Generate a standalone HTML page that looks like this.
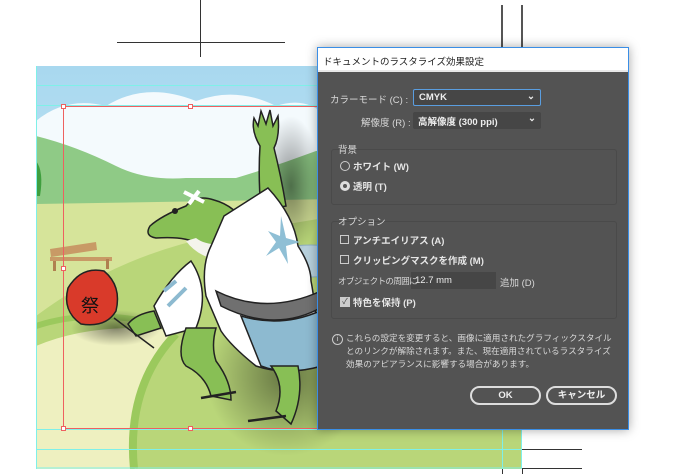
<!DOCTYPE html>
<html><head><meta charset="utf-8"><style>
*{margin:0;padding:0;box-sizing:border-box}
body{width:680px;height:474px;background:#fff;position:relative;overflow:hidden;font-family:"Liberation Sans","Noto Sans CJK JP",sans-serif}
.a{position:absolute}
.dlg{left:317px;top:47px;width:312px;height:383px;background:#535353;border:1px solid #3a8ee6;box-shadow:0 0 10px rgba(0,0,0,.35)}
.title{left:0;top:0;width:310px;height:24px;background:#fff;border-bottom:2px solid #e8e8e8;font-size:9.5px;color:#222;padding:6px 0 0 5px}
.t{font-size:9.5px;color:#d8d8d8;white-space:nowrap}
.b{font-weight:bold;color:#e6e6e6}
.sel{background:#464646;border-radius:2px;font-size:9.5px;color:#eee;font-weight:bold;padding:2px 0 0 5px}
.grp{border:1px solid #4a4a4a;border-radius:3px}
.cb{width:9px;height:9px;border:1px solid #ccc}
.btn{border:2px solid #ddd;border-radius:10px;color:#eee;font-size:9.5px;font-weight:bold;text-align:center;line-height:15px}
</style></head><body>
<div class="a" style="left:117px;top:42px;width:168px;height:1px;background:#333"></div>
<div class="a" style="left:200px;top:0;width:1px;height:57px;background:#333"></div>
<div class="a" style="left:501px;top:5px;width:2px;height:42px;background:#555"></div>
<div class="a" style="left:521px;top:5px;width:2px;height:42px;background:#555"></div>
<div class="a" style="left:522px;top:449px;width:60px;height:1px;background:#333"></div>
<div class="a" style="left:522px;top:468px;width:60px;height:1px;background:#333"></div>
<div class="a" style="left:502px;top:469px;width:1px;height:5px;background:#333"></div>
<div class="a" style="left:522px;top:469px;width:1px;height:5px;background:#333"></div>
<svg class="a" style="left:36px;top:66px" width="486" height="403" viewBox="0 0 486 403">
<defs>
<linearGradient id="sky" x1="0" y1="0" x2="0" y2="1"><stop offset="0" stop-color="#a8d8ef"/><stop offset="1" stop-color="#e6f4fb"/></linearGradient>
<radialGradient id="sh" cx=".5" cy=".5" r=".5"><stop offset="0" stop-color="#000" stop-opacity=".45"/><stop offset="1" stop-color="#000" stop-opacity="0"/></radialGradient>
</defs>
<rect width="486" height="403" fill="url(#sky)"/>
<path d="M0 55 Q30 30 70 40 Q110 15 160 35 Q200 20 240 40 Q270 30 290 50 L290 115 L0 115Z" fill="#f4fafd"/>
<path d="M0 70 Q40 80 80 100 Q110 115 150 112 L200 112 Q240 100 280 85 L486 70 L486 150 L0 150Z" fill="#8fca86"/>
<path d="M0 138 L486 130 L486 403 L0 403Z" fill="#d6e49a"/>
<path d="M0 250 Q80 190 180 170 L300 150 L486 200 L486 403 L100 403 Q90 320 140 270 Q60 260 0 280Z" fill="#b9d679"/>
<path d="M0 280 Q60 255 140 265 Q95 320 100 403 L0 403Z" fill="#eef0c0"/>
<path d="M0 260 Q60 240 140 262" stroke="#9bc95d" stroke-width="6" fill="none"/>
<path d="M98 403 Q90 320 140 268" stroke="#9bc95d" stroke-width="8" fill="none"/>
<path d="M0 95 Q8 105 4 130 L0 130Z" fill="#3f9e3e"/>
<ellipse cx="275" cy="195" rx="45" ry="16" fill="#b7d0dc" stroke="#8fb0c0"/>
<path d="M14 183 L60 176 L61 184 L15 191Z" fill="#c89a66"/><rect x="14" y="191" width="62" height="4" fill="#c89a66"/><rect x="17" y="195" width="3" height="10" fill="#b08050"/><rect x="70" y="193" width="3" height="10" fill="#b08050"/>
<ellipse cx="250" cy="310" rx="80" ry="80" fill="url(#sh)"/>
<ellipse cx="255" cy="120" rx="30" ry="70" fill="url(#sh)"/>
<ellipse cx="80" cy="262" rx="45" ry="18" fill="url(#sh)"/>
<path d="M225 145 Q222 110 224 80 Q215 65 218 52 L222 60 L225 45 L230 58 L234 44 L237 60 L242 50 Q244 70 238 82 Q245 110 250 140Z" fill="#88bf55" stroke="#222" stroke-width="1.5"/>
<path d="M150 140 Q160 128 178 134 Q200 140 210 160 Q212 180 200 195 Q175 200 162 178 Q150 170 120 172 Q108 170 114 160 Q125 150 150 140Z" fill="#88bf55" stroke="#222" stroke-width="1.5"/>
<path d="M150 175 Q165 195 195 195 L190 178 Q170 180 160 172Z" fill="#f4f4ec"/>
<circle cx="139" cy="145" r="3" fill="#222"/>
<path d="M148 126 L168 136 M163 125 L153 138" stroke="#fff" stroke-width="4"/>
<path d="M188 150 L232 122 Q258 150 262 180 Q275 200 275 215 Q280 240 284 300 Q250 310 220 300 Q195 280 185 265 L170 230 Q165 200 175 180Z" fill="#fff" stroke="#222" stroke-width="1.5"/>
<path d="M245 150 L250 172 L264 176 L250 180 L252 198 L243 182 L230 190 L240 176 L232 165 L244 170Z" fill="#8fbfd5"/>
<path d="M180 225 Q230 250 285 225 L288 240 Q240 268 185 240Z" fill="#707070" stroke="#222" stroke-width="1.5"/>
<path d="M205 250 Q245 262 284 245 L286 300 Q250 310 225 300Z" fill="#8dbad0" stroke="#222" stroke-width="1.5"/>
<path d="M155 195 Q135 210 118 240 L130 270 L160 262 Q175 225 155 195Z" fill="#fff" stroke="#222" stroke-width="1.5"/>
<path d="M128 225 L140 215 M132 240 L150 222" stroke="#8dbad0" stroke-width="4"/>
<path d="M118 245 Q100 248 92 258 L100 270 L125 262 Z" fill="#88bf55" stroke="#222" stroke-width="1.5"/>
<line x1="78" y1="252" x2="118" y2="282" stroke="#222" stroke-width="1.5"/>
<path d="M32 222 Q45 200 68 205 Q86 220 80 245 Q70 262 45 258 Q26 245 32 222Z" fill="#d93a2a" stroke="#222" stroke-width="1.5"/>
<text x="45" y="246" font-size="18" font-family="Noto Sans CJK JP,sans-serif" fill="#111">祭</text>
<path d="M150 262 Q140 290 150 300 Q170 310 175 330 L195 334 Q195 315 180 295 Q175 280 180 262Z" fill="#88bf55" stroke="#222" stroke-width="1.5"/>
<path d="M235 300 Q250 320 240 345 L255 358 Q268 330 262 300Z" fill="#88bf55" stroke="#222" stroke-width="1.5"/>
<path d="M165 332 L200 326 M212 355 L250 350" stroke="#222" stroke-width="2.5"/>
<g stroke="#7ff0e8" stroke-width="1" fill="none">
<line x1="0" y1="19.5" x2="486" y2="19.5"/><line x1="0" y1="39.5" x2="486" y2="39.5"/>
<line x1="0" y1="363.5" x2="486" y2="363.5"/><line x1="0" y1="383.5" x2="486" y2="383.5"/><line x1="0" y1="402" x2="486" y2="402"/>
<line x1="0.5" y1="0" x2="0.5" y2="403"/><line x1="466.5" y1="0" x2="466.5" y2="403"/><line x1="485.5" y1="0" x2="485.5" y2="403"/>
</g>
<rect x="27.5" y="40.5" width="254" height="322" fill="none" stroke="#ee6060"/>
<g fill="#fff" stroke="#ee6060"><rect x="25.5" y="38.5" width="4" height="4"/><rect x="152.5" y="38.5" width="4" height="4"/><rect x="25.5" y="200.5" width="4" height="4"/><rect x="25.5" y="360.5" width="4" height="4"/><rect x="152.5" y="360.5" width="4" height="4"/></g>
</svg>
<div class="a dlg">
<div class="a title">ドキュメントのラスタライズ効果設定</div>
<div class="a t" style="left:12px;top:44px">カラーモード (C) :</div>
<div class="a sel" style="left:95px;top:41px;width:128px;height:17px;border:1px solid #5a9ee0">CMYK<span style="position:absolute;right:5px;top:1px">⌄</span></div>
<div class="a t" style="left:43px;top:67px">解像度 (R) :</div>
<div class="a sel" style="left:95px;top:64px;width:128px;height:17px">高解像度 (300 ppi)<span style="position:absolute;right:5px;top:1px">⌄</span></div>
<div class="a grp" style="left:13px;top:101px;width:286px;height:56px"></div>
<div class="a t" style="left:20px;top:94px">背景</div>
<div class="a" style="left:22px;top:113px;width:10px;height:10px;border:1px solid #ccc;border-radius:50%"></div>
<div class="a t b" style="left:35px;top:111px">ホワイト (W)</div>
<div class="a" style="left:22px;top:133px;width:10px;height:10px;background:#ddd;border-radius:50%"><div style="margin:3px;width:4px;height:4px;background:#555;border-radius:50%"></div></div>
<div class="a t b" style="left:35px;top:131px">透明 (T)</div>
<div class="a grp" style="left:13px;top:173px;width:286px;height:98px"></div>
<div class="a t" style="left:20px;top:166px">オプション</div>
<div class="a cb" style="left:22px;top:187px"></div>
<div class="a t b" style="left:35px;top:185px">アンチエイリアス (A)</div>
<div class="a cb" style="left:22px;top:207px"></div>
<div class="a t b" style="left:35px;top:205px">クリッピングマスクを作成 (M)</div>
<div class="a" style="left:93px;top:224px;width:85px;height:17px;background:#464646;font-size:9.5px;color:#eee;padding:3px 0 0 4px">12.7 mm</div>
<div class="a t" style="left:20px;top:227px;font-size:8.6px;letter-spacing:-0.7px">オブジェクトの周囲に</div>
<div class="a t" style="left:182px;top:227px">追加 (D)</div>
<div class="a" style="left:22px;top:249px;width:10px;height:10px;background:#ccc;font-size:8px;color:#444;text-align:center;line-height:10px">✓</div>
<div class="a t b" style="left:35px;top:247px">特色を保持 (P)</div>
<div class="a" style="left:14px;top:286px;width:11px;height:11px;border:1px solid #ccc;border-radius:50%;font-size:7px;color:#ddd;text-align:center;line-height:9px">i</div>
<div class="a t" style="left:28px;top:284px;line-height:13px;font-size:8.6px">これらの設定を変更すると、画像に適用されたグラフィックスタイル<br>とのリンクが解除されます。また、現在適用されているラスタライズ<br>効果のアピアランスに影響する場合があります。</div>
<div class="a btn" style="left:152px;top:338px;width:71px;height:19px">OK</div>
<div class="a btn" style="left:228px;top:338px;width:71px;height:19px">キャンセル</div>
</div>
</body></html>
